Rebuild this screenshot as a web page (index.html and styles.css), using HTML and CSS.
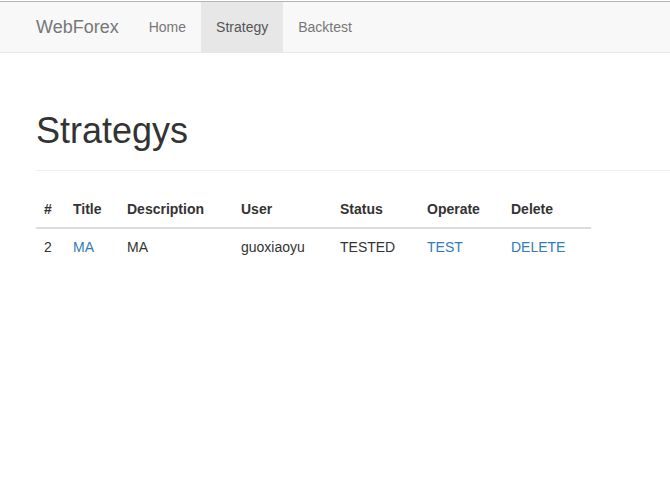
FILE: index.html
```html
<!DOCTYPE html>
<html>
<head>
<meta charset="utf-8">
<title>WebForex</title>
<link rel="stylesheet" href="styles.css">
</head>
<body>
<nav class="navbar">
  <a class="brand" href="#">WebForex</a>
  <ul class="nav">
    <li><a href="#">Home</a></li>
    <li class="active"><a href="#">Strategy</a></li>
    <li><a href="#">Backtest</a></li>
  </ul>
</nav>
<main class="main">
  <div class="page-header">
    <h1>Strategys</h1>
  </div>
  <table class="table">
    <thead>
      <tr>
        <th class="c-id">#</th>
        <th class="c-title">Title</th>
        <th class="c-desc">Description</th>
        <th class="c-user">User</th>
        <th class="c-status">Status</th>
        <th class="c-op">Operate</th>
        <th class="c-del">Delete</th>
      </tr>
    </thead>
    <tbody>
      <tr>
        <td>2</td>
        <td><a href="#">MA</a></td>
        <td>MA</td>
        <td>guoxiaoyu</td>
        <td>TESTED</td>
        <td><a href="#">TEST</a></td>
        <td><a href="#">DELETE</a></td>
      </tr>
    </tbody>
  </table>
</main>
</body>
</html>
```
FILE: styles.css
```css
* { box-sizing: border-box; }
html, body { margin: 0; padding: 0; background: #fff; }
body {
  font-family: "Liberation Sans", Arial, sans-serif;
  font-size: 14px;
  line-height: 1.42857143;
  color: #333;
  padding-top: 1px;
}
a { color: #337ab7; text-decoration: none; }

.navbar {
  display: flex;
  align-items: stretch;
  height: 52px;
  background: #f8f8f8;
  border-top: 1px solid #b4b4b4;
  border-bottom: 1px solid #e7e7e7;
  padding-left: 21px;
}
.brand {
  display: block;
  padding: 15px 15px;
  font-size: 18px;
  line-height: 20px;
  color: #777;
}
.nav {
  display: flex;
  list-style: none;
  margin: 0;
  padding: 0;
}
.nav li a {
  display: block;
  padding: 15px 15px;
  line-height: 20px;
  color: #777;
}
.nav li.active a {
  background: #e7e7e7;
  color: #555;
}

.main {
  padding-left: 36px;
}
.page-header {
  margin: 58px 0 20px;
  padding-bottom: 9px;
  border-bottom: 1px solid #eee;
}
.page-header h1 {
  margin: 0 0 10px;
  font-family: "Liberation Sans", Arial, sans-serif;
  font-size: 36px;
  font-weight: 500;
  line-height: 1.1;
  color: #333;
}

.table {
  width: 555px;
  border-collapse: collapse;
  border-spacing: 0;
  table-layout: fixed;
}
.table th, .table td {
  padding: 8px;
  text-align: left;
  line-height: 20px;
  vertical-align: top;
}
.table th {
  font-weight: bold;
  border-bottom: 2px solid #ddd;
}
.table td {
  border-top: 1px solid #ddd;
}
.c-id { width: 29px; }
.c-title { width: 54px; }
.c-desc { width: 114px; }
.c-user { width: 99px; }
.c-status { width: 87px; }
.c-op { width: 84px; }
.c-del { width: 88px; }
```
